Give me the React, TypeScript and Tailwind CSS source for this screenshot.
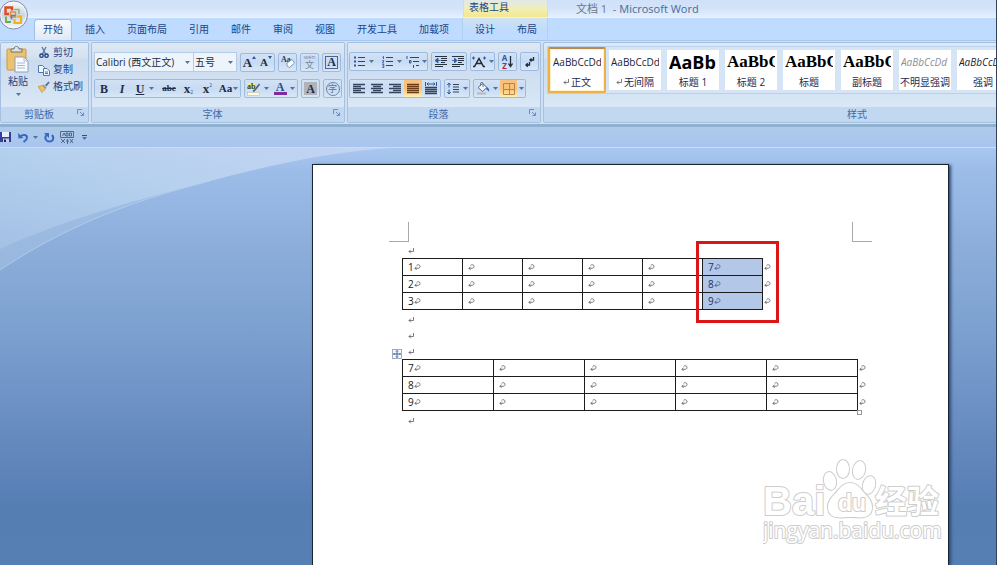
import type { ReactNode } from "react";

const serif = "font-['Liberation_Serif',serif] font-bold text-[#222c44]";

function Caret() {
  return (
    <svg width="5" height="3" viewBox="0 0 5 3" className="shrink-0" aria-hidden="true">
      <path d="M0 0h5L2.500 3z" fill="#54749f" />
    </svg>
  );
}

function Group({ children, className = "" }: { children: ReactNode; className?: string }) {
  return (
    <div
      className={`flex h-[19px] overflow-hidden rounded-xs border border-[#9dbbe0] bg-linear-to-b from-[#d3e2f5] via-[#c8dbf2] to-[#d8e7f8] ${className}`}
    >
      {children}
    </div>
  );
}

function Tool({
  label,
  children,
  className = "w-[17px]",
  caret = false,
  active = false,
}: {
  label: string;
  children: ReactNode;
  className?: string;
  caret?: boolean;
  active?: boolean;
}) {
  return (
    <button
      type="button"
      aria-label={label}
      title={label}
      className={`flex h-full shrink-0 items-center justify-center gap-[3px] leading-none ${
        active ? "bg-linear-to-b from-[#f7c185] via-[#f9c272] to-[#fff0b5]" : ""
      } ${className}`}
    >
      {children}
      {caret && <Caret />}
    </button>
  );
}

function Panel({ title, launcher = true, className = "", children }: { title: string; launcher?: boolean; className?: string; children: ReactNode }) {
  return (
    <section
      aria-label={title}
      className={`flex h-[81px] flex-col overflow-hidden rounded-xs border border-[#a5c1e2] bg-[linear-gradient(#dfe9f5_0%,#d5e1f1_18%,#cadbee_22%,#d9e7f6_80%)] ${className}`}
    >
      <div className="min-h-0 flex-1">{children}</div>
      <div className="flex h-[15px] shrink-0 items-center bg-[#c1d8f0] text-[10px] text-[#3e6aaa]">
        <span className="flex-1 text-center">{title}</span>
        {launcher && (
          <button type="button" aria-label={`${title}设置`} className="mr-1 mb-1">
            <svg width="7" height="7" viewBox="0 0 7 7" fill="none" stroke="#6a8cb9">
              <path d="M.5 5V.5H5M3 3l3 3M6.500 3.500v3h-3" />
            </svg>
          </button>
        )}
      </div>
    </section>
  );
}

function Lines({ rows, color = "#35435c" }: { rows: [number, number][]; color?: string }) {
  return (
    <svg width="12" height="11" viewBox="0 0 12 11" aria-hidden="true">
      {rows.map(([x, w], i) => (
        <path key={i} d={`M${x} ${i * 2 + 1.5}h${w}`} stroke={color} strokeWidth="1.300" />
      ))}
    </svg>
  );
}

function PilcrowArrow() {
  return (
    <svg width="6" height="6" viewBox="0 0 6 6" fill="none" stroke="#5b5b66" strokeWidth=".8" className="inline-block shrink-0" role="img" aria-label="段落标记">
      <path d="M5.500 0v3.500H1M2.800 1.700L1 3.500l1.800 1.800" />
    </svg>
  );
}

function CellMark({ selected = false }: { selected?: boolean }) {
  return (
    <svg
      width="7"
      height="7"
      viewBox="0 0 7 7"
      fill="none"
      stroke={selected ? "#41598a" : "#5b5b66"}
      strokeWidth=".8"
      className="inline-block shrink-0"
      role="img"
      aria-label="单元格标记"
    >
      <path d="M2.600 1.300C3.600.2 6 .6 6 2.400 6 3.800 5 4.300 4 4.300H.9M2.600 2.600L.9 4.300 2.600 6" />
    </svg>
  );
}

function Paragraph() {
  return (
    <p className="flex h-4 items-center pt-[3px] pl-[6px]">
      <PilcrowArrow />
    </p>
  );
}

function WordTable({ rows, label, wide = false, selectedColumn = -1 }: { rows: string[][]; label: string; wide?: boolean; selectedColumn?: number }) {
  return (
    <table aria-label={label} className={`table-fixed border-collapse ${wide ? "w-[466px]" : "w-[371px]"}`}>
      <colgroup>
        {rows[0].map((_, i) => (
          <col key={i} className={wide ? "w-[91px]" : "w-[60px]"} />
        ))}
        <col />
      </colgroup>
      <tbody>
        {rows.map((row, r) => (
          <tr key={r} className="h-[17px]">
            {row.map((cell, c) => (
              <td
                key={c}
                className={`border border-[#1c1c1c] p-0 pl-[5px] ${c === selectedColumn ? "bg-[#b3c7e9] text-[#1c3466]" : ""}`}
              >
                <span className="flex h-4 items-center text-[10px] leading-4">
                  {cell}
                  <CellMark selected={c === selectedColumn} />
                </span>
              </td>
            ))}
            <td className="p-0 pl-px">
              <span className="flex h-4 items-center">
                <CellMark />
              </span>
            </td>
          </tr>
        ))}
      </tbody>
    </table>
  );
}

function OfficeButton() {
  return (
    <button type="button" aria-label="Office 按钮" className="absolute top-0 left-0 z-10">
      <svg width="29" height="31" viewBox="0 0 29 31">
        <defs>
          <linearGradient id="orb" x1="0" y1="0" x2="0" y2="1">
            <stop offset="0" stopColor="#fafcff" />
            <stop offset=".5" stopColor="#ccd5e2" />
            <stop offset="1" stopColor="#f4f8fc" />
          </linearGradient>
        </defs>
        <circle cx="13.500" cy="15" r="14" fill="url(#orb)" stroke="#7e8fa8" />
        <circle cx="13.500" cy="15" r="12.600" fill="none" stroke="#fff" opacity=".7" />
        <g fill="none">
          <path d="M9 14H5.500V7.500h6.500v3" stroke="#dd4a1f" strokeWidth="2.400" />
          <path d="M14 9.500h5v4.500" stroke="#8cbf63" strokeWidth="1.600" />
          <path d="M6 16.500v5.500h5" stroke="#6cab4c" strokeWidth="1.800" />
          <path d="M10.500 12h5v5h-5z" stroke="#f08a35" strokeWidth="1.500" />
          <path d="M11.500 19.500v-4h4" stroke="#3f8cc9" strokeWidth="1.600" />
          <path d="M17 16.500h4v6.500h-6.500v-4" stroke="#f2b21c" strokeWidth="2.200" />
        </g>
      </svg>
    </button>
  );
}

const tabs = ["插入", "页面布局", "引用", "邮件", "审阅", "视图", "开发工具", "加载项"];

function TitleAndTabs() {
  return (
    <header className="relative text-[10px] text-[#1c4587]">
      <OfficeButton />
      <div className="flex h-[18px] border-b border-[#e9f3fe] bg-linear-to-b from-[#cfe0f8] via-[#d3e4fa] to-[#e4effc]">
        <div className="ml-[463px] w-[85px] border-x border-[#dfe0ae] bg-linear-to-b from-[#dfe9ea] via-[#efeeb9] to-[#f5e889] pl-[5px] leading-[14px]">
          表格工具
        </div>
        <h1 className="ml-7 text-[11px] leading-[17px] text-[#4d6a96]">
          <span className="text-[#6c7685]">文档 1&nbsp; - </span>Microsoft Word
        </h1>
      </div>
      <nav aria-label="功能区" className="flex h-[23px] items-end border-b border-[#a9c7ee] bg-[#bfdbff]">
        <a href="#home" aria-current="page" className="ml-[34px] h-[21px] w-[38px] rounded-t-sm border border-b-0 border-[#9fbfe8] bg-linear-to-b from-[#f6faff] to-[#dfe9f6] text-center leading-[19px]">
          开始
        </a>
        <div className="ml-[13px] flex gap-[22px]">
          {tabs.map((t) => (
            <a key={t} href="#tab" className="leading-[21px]">
              {t}
            </a>
          ))}
        </div>
        <div className="ml-[13px] flex h-full w-[86px] items-end gap-[22px] border-x border-[#b2cfee] bg-linear-to-b from-[#cfe2f0] to-[#bfdbff] to-60% pl-[12px]">
          <a href="#design" className="leading-[21px]">设计</a>
          <a href="#layout" className="leading-[21px]">布局</a>
        </div>
      </nav>
    </header>
  );
}

function ClipboardPanel() {
  const item = "flex h-[17px] items-center gap-[3px]";
  return (
    <Panel title="剪贴板" className="w-[89px] shrink-0">
      <div className="flex gap-[9px] pt-px pl-[6px] text-[10px] text-[#1c4587]">
        <button type="button" className="flex w-[22px] flex-col items-center">
          <svg width="24" height="27" viewBox="0 0 24 27" className="mt-[2px]">
            <rect x="1" y="3" width="19" height="21" rx="1" fill="#edc26d" stroke="#c99a49" />
            <path d="M5 6V3h3c0-3.500 5-3.500 5 0h3v3z" fill="#dce3ea" stroke="#69727e" />
            <path d="M9 11h9l4 4v11H9z" fill="#f7faff" stroke="#8b9fbf" />
            <path d="M18 11v4h4M11 17h8M11 19.500h8M11 22h8" fill="none" stroke="#aabad2" />
          </svg>
          <span className="mt-px leading-[14px]">粘贴</span>
          <span className="mt-[5px]"><Caret /></span>
        </button>
        <div>
          <button type="button" className={item}>
            <svg width="12" height="13" viewBox="0 0 12 13" fill="none">
              <path d="M4 1l3.500 7M8 1L4.500 8" stroke="#5678aa" strokeWidth="1.300" />
              <circle cx="3.500" cy="9.700" r="1.700" stroke="#1d3f86" strokeWidth="1.400" />
              <circle cx="8.500" cy="9.700" r="1.700" stroke="#1d3f86" strokeWidth="1.400" />
            </svg>
            剪切
          </button>
          <button type="button" className={item}>
            <svg width="12" height="12" viewBox="0 0 12 12" fill="#f2f7ff" stroke="#4f78b2">
              <path d="M.5 1.500h4l2 2v5h-6z" />
              <path d="M5.500 4.500h3.500l2.500 2.500v4.500h-6zM7 8h3M7 9.500h3" />
            </svg>
            复制
          </button>
          <button type="button" className={item}>
            <svg width="12" height="12" viewBox="0 0 12 12">
              <path d="M7 4l3.500-3.500 1.200 1L8.500 5.500z" fill="#5c6e93" />
              <path d="M5.500 3.500l3 3-1 1.500-3.500-3.500z" fill="#8c97ab" />
              <path d="M4.500 4.500L0 5.500l4 6 3.500-3.500z" fill="#ecc263" stroke="#b68b34" strokeWidth=".6" />
            </svg>
            格式刷
          </button>
        </div>
      </div>
    </Panel>
  );
}

function Combo({ label, value, className }: { label: string; value: string; className: string }) {
  return (
    <label className={`relative flex h-[20px] items-center border border-[#b4cdea] bg-[#edf4fc] ${className}`}>
      <select aria-label={label} defaultValue={value} className="h-full w-full appearance-none bg-transparent pl-px text-[10px] text-[#222b3c]">
        <option>{value}</option>
      </select>
      <span className="pointer-events-none absolute right-[3px] flex">
        <Caret />
      </span>
    </label>
  );
}

function FontPanel() {
  return (
    <Panel title="字体" className="shrink-0">
      <div className="flex flex-col gap-[7px] px-[2px] pt-[9px]">
        <div className="flex items-center gap-[3px]">
          <div className="flex">
            <Combo label="字体" value="Calibri (西文正文)" className="w-[100px]" />
            <Combo label="字号" value="五号" className="w-[43px] border-l-0" />
          </div>
          <Group>
            <Tool label="增大字体">
              <span className={`${serif} text-[13px]`}>A</span>
              <svg width="4" height="3" className="-ml-[3px] mb-[9px]"><path d="M0 3h4L2 0z" fill="#2b57a0" /></svg>
            </Tool>
            <Tool label="缩小字体" className="w-[16px]">
              <span className={`${serif} text-[11px]`}>A</span>
              <svg width="4" height="3" className="-ml-[3px] mb-[9px]"><path d="M0 0h4L2 3z" fill="#2b57a0" /></svg>
            </Tool>
          </Group>
          <Group>
            <Tool label="清除格式">
              <svg width="14" height="14" viewBox="0 0 14 14">
                <text x="0" y="7" fontSize="8" fontWeight="bold" fontFamily="Liberation Serif, serif" fill="#2c3950">Aa</text>
                <path d="M6 8l5-3.500 2.500 3.500-5 4.500-2.500-1.500z" fill="#fbfcff" stroke="#6f83a3" strokeWidth=".8" />
              </svg>
            </Tool>
          </Group>
          <Group>
            <Tool label="拼音指南">
              <span className="flex flex-col items-center text-[#7386a6]">
                <span className="text-[6px] leading-[6px]">wén</span>
                <span className="text-[9px] leading-[10px]">文</span>
              </span>
            </Tool>
          </Group>
          <Group>
            <Tool label="字符边框">
              <span className={`${serif} flex size-[13px] items-center justify-center border border-[#4d668f] text-[12px]`}>A</span>
            </Tool>
          </Group>
        </div>
        <div className="flex items-center gap-[3px]">
          <Group>
            <Tool label="加粗" className="w-[18px]"><span className={`${serif} text-[12px]`}>B</span></Tool>
            <Tool label="倾斜" className="w-[18px]"><span className={`${serif} text-[12px] italic`}>I</span></Tool>
            <Tool label="下划线" caret className="w-[28px]"><span className={`${serif} mr-[2px] text-[12px] underline`}>U</span></Tool>
            <Tool label="删除线" className="w-[20px]"><span className={`${serif} text-[9px] line-through`}>abe</span></Tool>
            <Tool label="下标" className="w-[19px]"><span className={`${serif} text-[13px]`}>x</span><span className="-ml-[3px] mt-[7px] text-[5px] text-[#2b57a0]">2</span></Tool>
            <Tool label="上标" className="w-[19px]"><span className={`${serif} text-[13px]`}>x</span><span className="-ml-[3px] mb-[7px] text-[5px] text-[#2b57a0]">2</span></Tool>
            <Tool label="更改大小写" caret className="w-[23px]"><span className={`${serif} -mr-[2px] text-[11px]`}>Aa</span></Tool>
          </Group>
          <Group>
            <Tool label="突出显示" caret className="w-[26px]">
              <svg width="14" height="14" viewBox="0 0 14 14">
                <rect x="0" y="1" width="8" height="7" fill="#f5ef6d" />
                <text x="0" y="7" fontSize="8" fontWeight="bold" fontFamily="Liberation Serif, serif" fill="#2c3950">ab</text>
                <path d="M12.500 2L8 8l-2 1.500" stroke="#57657d" strokeWidth="1.700" fill="none" />
                <rect x=".5" y="10.500" width="12" height="3" fill="#fbfbe0" stroke="#bdc0a9" strokeWidth=".6" />
              </svg>
            </Tool>
            <Tool label="字体颜色" caret className="w-[26px]">
              <span className="flex w-[13px] flex-col items-center border-b-3 border-[#7c2ba0]">
                <span className={`${serif} text-[12px] leading-[10px] text-[#274f96]`}>A</span>
              </span>
            </Tool>
          </Group>
          <Group>
            <Tool label="字符底纹">
              <span className={`${serif} flex size-[13px] items-center justify-center bg-[#b0b3b9] text-[12px]`}>A</span>
            </Tool>
          </Group>
          <Group>
            <Tool label="带圈字符">
              <span className="flex size-[14px] items-center justify-center rounded-full border border-[#6c83a8] text-[9px] text-[#5b739b]">字</span>
            </Tool>
          </Group>
        </div>
      </div>
    </Panel>
  );
}

function ParagraphPanel() {
  const indent = "M0 .5h12M6 2.500h6M6 4.500h6M6 6.500h4M0 8.500h12M0 10.500h8";
  return (
    <Panel title="段落" className="shrink-0">
      <div className="flex flex-col gap-2 px-px pt-[9px]">
        <div className="flex items-center gap-[3px]">
          <Group>
            <Tool label="项目符号" caret className="w-[28px]">
              <svg width="12" height="11" viewBox="0 0 12 11">
                <path d="M0 1.500h2M0 5.500h2M0 9.500h2" stroke="#2b57a0" strokeWidth="2" />
                <path d="M4 1.500h7M4 5.500h7M4 9.500h7" stroke="#35435c" strokeWidth="1.200" />
              </svg>
            </Tool>
            <Tool label="编号" caret className="w-[27px]">
              <svg width="12" height="12" viewBox="0 0 12 12">
                <path d="M.5 1L1.500.5V3M.3 4.500h1.500L.5 7H2M.3 8.500h1.500v3H.3M.5 10h1" fill="none" stroke="#2b57a0" strokeWidth=".9" />
                <path d="M4 1.500h7M4 5.500h7M4 9.500h7" stroke="#35435c" strokeWidth="1.200" />
              </svg>
            </Tool>
            <Tool label="多级列表" caret className="w-[22px]">
              <svg width="13" height="12" viewBox="0 0 13 12">
                <path d="M1 0v3M3.500 4.500h1.500v2.500H3.500zM7.500 9v3" fill="none" stroke="#2b57a0" />
                <path d="M4 1.500h9M7 5.500h6M10 9.500h3" stroke="#35435c" strokeWidth="1.200" />
              </svg>
            </Tool>
          </Group>
          <Group>
            <Tool label="减少缩进量">
              <svg width="12" height="11" viewBox="0 0 12 11">
                <path d={indent} stroke="#2a3242" strokeWidth="1.200" />
                <path d="M0 4.500L3 2v5zM3 4.500h2.500" fill="#2b57a0" stroke="#2b57a0" strokeWidth=".8" />
              </svg>
            </Tool>
            <Tool label="增加缩进量">
              <svg width="12" height="11" viewBox="0 0 12 11">
                <path d={indent} stroke="#2a3242" strokeWidth="1.200" />
                <path d="M5 4.500L2.500 2v5zM0 4.500h2.500" fill="#2b57a0" stroke="#2b57a0" strokeWidth=".8" />
              </svg>
            </Tool>
          </Group>
          <Group>
            <Tool label="中文版式" caret className="w-[23px]">
              <svg width="14" height="12" viewBox="0 0 14 12" fill="none">
                <path d="M1 10.500h1.500L7 2.500l4.500 8H13M4 7.500h6" stroke="#1f2838" strokeWidth="1.500" />
                <path d="M0 2h3M1.500.5v3M11 2h3M12.500.5v3" stroke="#2b57a0" strokeWidth="1.100" />
              </svg>
            </Tool>
          </Group>
          <Group>
            <Tool label="排序">
              <span className="flex flex-col text-[8px] leading-[8px] font-bold text-[#2b57a0]">
                <span>A</span>
                <span className="text-[#a32c38]">Z</span>
              </span>
              <svg width="5" height="13" viewBox="0 0 5 13" className="-ml-[2px]">
                <path d="M2.500 1v9M.5 8.500l2 3 2-3" fill="none" stroke="#222b3c" strokeWidth="1.300" />
              </svg>
            </Tool>
          </Group>
          <Group>
            <Tool label="显示编辑标记">
              <svg width="10" height="12" viewBox="0 0 10 12" fill="none" stroke="#1f2838" strokeWidth="1.300">
                <path d="M8.500 1v3H5M6.500 2.500L5 4l1.500 1.500M4.500 6v3H1M2.700 7.300L1 9l1.700 1.700" />
              </svg>
            </Tool>
          </Group>
        </div>
        <div className="flex items-center gap-[3px]">
          <Group>
            <Tool label="左对齐" className="w-[18px]"><Lines rows={[[0, 12], [0, 8], [0, 12], [0, 8], [0, 12]]} /></Tool>
            <Tool label="居中" className="w-[18px]"><Lines rows={[[0, 12], [2, 8], [0, 12], [2, 8], [0, 12]]} /></Tool>
            <Tool label="右对齐" className="w-[18px]"><Lines rows={[[0, 12], [4, 8], [0, 12], [4, 8], [0, 12]]} /></Tool>
            <Tool label="两端对齐" active className="w-[18px]"><Lines rows={[[0, 12], [0, 12], [0, 12], [0, 12], [0, 12]]} color="#6b3c16" /></Tool>
            <Tool label="分散对齐" className="w-[18px]">
              <svg width="12" height="13" viewBox="0 0 12 13">
                <path d="M0 5.500h12M0 7.500h12M0 9.500h12M0 11.500h12" stroke="#35435c" strokeWidth="1.300" />
                <path d="M.5 0v4M11.500 0v4M2 2h8M3.500.5L2 2l1.500 1.500M8.500.5L10 2 8.500 3.500" fill="none" stroke="#2b57a0" />
              </svg>
            </Tool>
          </Group>
          <Group>
            <Tool label="行距" caret className="w-[24px]">
              <svg width="13" height="13" viewBox="0 0 13 13">
                <path d="M2 1v4.500M2 7.500V12M.3 3L2 1l1.700 2M.3 10L2 12l1.700-2" fill="none" stroke="#2b57a0" />
                <path d="M6 2.500h6M6 5h6M6 7.500h6M6 10h6" stroke="#35435c" strokeWidth="1.200" />
              </svg>
            </Tool>
          </Group>
          <Group>
            <Tool label="底纹" caret className="w-[26px]">
              <svg width="14" height="13" viewBox="0 0 14 13">
                <path d="M2 5.500L6.500 1.500l4.500 4-4.500 4z" fill="#eef3fa" stroke="#5b6c8a" />
                <path d="M4.500 4V1.500C4.500 0 7 0 7 1.500V5" fill="none" stroke="#5b6c8a" strokeWidth=".9" />
                <path d="M11 5c2 1 2.500 3 2 5-1-2-2-2-3-3z" fill="#2f68b8" />
                <path d="M1 11.500h9" stroke="#b6b9b6" strokeWidth="2" />
              </svg>
            </Tool>
            <Tool label="边框" active className="w-[17px]">
              <svg width="12" height="12" viewBox="0 0 12 12" fill="none" stroke="#b98642">
                <path d="M.5.5h11v11H.5zM6.500.5v11M.5 6.500h11" />
              </svg>
            </Tool>
            <Tool label="边框选项" className="w-[8px]"><Caret /></Tool>
          </Group>
        </div>
      </div>
    </Panel>
  );
}

const calibri = "text-[10px] text-[#1b2433]";
const cambria = "font-['Liberation_Serif',serif] text-[17px] font-bold text-black";
const styles = [
  { name: "正文", mark: true, sample: "AaBbCcDd", look: calibri },
  { name: "无间隔", mark: true, sample: "AaBbCcDd", look: calibri },
  { name: "标题 1", sample: "AaBb", look: "text-[18px] font-bold text-black" },
  { name: "标题 2", sample: "AaBbC", look: cambria },
  { name: "标题", sample: "AaBbC", look: cambria },
  { name: "副标题", sample: "AaBbC", look: cambria },
  { name: "不明显强调", sample: "AaBbCcDd", look: "text-[10px] italic text-[#8b8f96]" },
  { name: "强调", sample: "AaBbCcDd", look: "text-[10px] italic text-[#1b2433]" },
];

function StylesPanel() {
  return (
    <Panel title="样式" launcher={false} className="min-w-[628px] flex-1">
      <div className="flex px-[3px] pt-[3px]">
        <div className="flex flex-1 overflow-hidden border-y border-l border-[#b9d1ec] bg-[#d6e5f6]">
          {styles.map((s, i) => (
            <button
              key={s.name}
              type="button"
              aria-pressed={i === 0}
              className={`flex h-[46px] w-[58px] shrink-0 border-2 p-px ${
                i === 0 ? "rounded-xs border-[#eeb147] border-t-[#b98b4d] bg-[#fff1c4]" : "border-transparent"
              }`}
            >
              <span className="flex h-[40px] w-full flex-col overflow-hidden bg-white px-[2px]">
                <span className={`flex h-[24px] items-center overflow-hidden whitespace-nowrap ${s.look}`}>{s.sample}</span>
                <span className="flex h-[16px] items-center justify-center gap-[2px] text-[10px] whitespace-nowrap text-[#1e2a50]">
                  {s.mark && <PilcrowArrow />}
                  {s.name}
                </span>
              </span>
            </button>
          ))}
        </div>
      </div>
    </Panel>
  );
}

function QuickAccess() {
  return (
    <div role="toolbar" aria-label="快速访问工具栏" className="flex h-[21px] items-center border-b border-[#c9def6] bg-linear-to-b from-[#aecbe9] to-[#a9c4ee]">
      <button type="button" aria-label="保存">
        <svg width="12" height="12" viewBox="0 0 12 12">
          <path d="M0 1h11v10H0z" fill="#343d9a" />
          <path d="M2 1h7v5H2z" fill="#e8eefb" />
          <path d="M3 7.500h6V11H3z" fill="#c9cfe2" />
          <path d="M4 8.500h2V11H4z" fill="#202858" />
        </svg>
      </button>
      <button type="button" aria-label="撤消" className="ml-[6px] flex items-center gap-[4px]">
        <svg width="11" height="11" viewBox="0 0 11 11" fill="none">
          <path d="M2 4.500C5 2 9 2.500 9 5.500 9 8 7 9 5.500 10" stroke="#356ac4" strokeWidth="2" />
          <path d="M0 1l.5 5.500L5.500 6z" fill="#356ac4" />
        </svg>
        <Caret />
      </button>
      <button type="button" aria-label="重复" className="ml-[6px]">
        <svg width="11" height="11" viewBox="0 0 11 11" fill="none">
          <path d="M2.500 3C0 6 2 9.500 5.500 9.500S10.500 6 8 3" stroke="#356ac4" strokeWidth="2" />
          <path d="M0 1h5v5z" fill="#356ac4" />
        </svg>
      </button>
      <button type="button" aria-label="表格" className="ml-[5px]">
        <svg width="14" height="13" viewBox="0 0 14 13" fill="none" stroke="#4c5f81" strokeWidth=".9">
          <path d="M.5.5h13v6H.5zM2.500 5L4 2l1.500 3M6 2h2v3H6zM9.500 2h2v3h-2z" />
          <path d="M1 8l4 4M5 8l-4 4M6 10h3M7.500 8v5M10 8l3 4M13 8l-3 4" />
        </svg>
      </button>
      <button type="button" aria-label="自定义快速访问工具栏" className="ml-[8px] flex flex-col items-center gap-px">
        <span className="h-px w-[5px] bg-[#314e7f]" />
        <Caret />
      </button>
    </div>
  );
}

function Watermark() {
  return (
    <svg className="absolute top-[293px] right-px" width="184" height="92" viewBox="0 0 184 92" role="img" aria-label="Baidu 经验">
      <g fill="#fff" stroke="#cdcdcd" strokeWidth="2" strokeLinejoin="round" style={{ paintOrder: "stroke" }}>
        <text x="0" y="57" fontSize="40" fontWeight="bold" fontFamily="Liberation Sans, sans-serif">Bai</text>
        <text x="112" y="55" fontSize="32" fontWeight="bold" fontFamily="Noto Sans CJK SC, sans-serif">经验</text>
        <text x="0" y="80" fontSize="21" fontFamily="Open Sans, sans-serif">jingyan.baidu.com</text>
        <ellipse cx="67" cy="23" rx="6" ry="9" transform="rotate(-12 67 23)" />
        <ellipse cx="80" cy="11" rx="6" ry="9" />
        <ellipse cx="96" cy="12" rx="6" ry="9" transform="rotate(12 96 12)" />
        <ellipse cx="106" cy="27" rx="6" ry="9" transform="rotate(15 106 27)" />
        <path d="M87 25c8 0 11 7 17 13 8 8 6 20-3 21-5 1-8 0-14 0s-9 1-14 0c-9-1-11-13-3-21 6-6 9-13 17-13z" />
        <text x="75" y="53" fontSize="23" fontWeight="bold" fontFamily="Liberation Sans, sans-serif">du</text>
      </g>
    </svg>
  );
}

function Page() {
  return (
    <article className="relative w-full max-w-[637px] border border-b-0 border-[#1b2230] bg-white pt-[76px] pl-[89px] text-[#202020] shadow-[2px_1px_3px_#2c4a78]">
      <span className="absolute top-[57px] left-[76px] h-[20px] w-[20px] border-r border-b border-[#a9a9a9]" />
      <span className="absolute top-[57px] right-[76px] h-[20px] w-[20px] border-b border-l border-[#a9a9a9]" />
      <div className="pb-px"><Paragraph /></div>
      <div className="relative w-max">
        <WordTable
          label="表格一"
          selectedColumn={5}
          rows={[
            ["1", "", "", "", "", "7"],
            ["2", "", "", "", "", "8"],
            ["3", "", "", "", "", "9"],
          ]}
        />
        <span className="pointer-events-none absolute -top-[17px] left-[294px] h-[82px] w-[83px] border-3 border-[#dc1517]" />
      </div>
      <Paragraph />
      <Paragraph />
      <div className="pb-px"><Paragraph /></div>
      <div className="relative w-max">
        <button type="button" aria-label="移动表格" className="absolute -top-[10px] -left-[10px]">
          <svg width="10" height="10" viewBox="0 0 10 10" fill="none" stroke="#33569c" strokeWidth=".9">
            <rect x=".5" y=".5" width="9" height="9" fill="#f4f7fc" stroke="#96a3ba" />
            <path d="M5 1.500v7M1.500 5h7M4 2.500l1-1 1 1M4 7.500l1 1 1-1M2.500 4l-1 1 1 1M7.500 4l1 1-1 1" />
          </svg>
        </button>
        <WordTable
          label="表格二"
          wide
          rows={[
            ["7", "", "", "", ""],
            ["8", "", "", "", ""],
            ["9", "", "", "", ""],
          ]}
        />
        <span className="absolute -bottom-[4px] left-[455px] size-[5px] border border-[#9a9a9a] bg-white" />
      </div>
      <Paragraph />
      <Watermark />
    </article>
  );
}

export default function App() {
  return (
    <div className="flex min-h-screen flex-col overflow-hidden border-r border-[#33415a] font-['Open_Sans','Noto_Sans_CJK_SC',sans-serif]">
      <TitleAndTabs />
      <div className="flex gap-[2px] overflow-hidden border-b-3 border-[#8fb1cf] bg-[#cfe0f3] pt-px pb-px">
        <ClipboardPanel />
        <FontPanel />
        <ParagraphPanel />
        <StylesPanel />
      </div>
      <QuickAccess />
      <main className="relative flex flex-1 justify-end overflow-hidden bg-[linear-gradient(#a9c7f0_0%,#9dbde9_5%,#8daedb_23%,#80a4d2_39%,#7094c6_58%,#6388bd_72%,#5c82b9_80%,#557fb3_86%,#5580b3_100%)] pt-4 pr-[47px]">
        <svg className="absolute top-0 left-0" width="400" height="130" viewBox="0 0 400 130" aria-hidden="true">
          <defs>
            <linearGradient id="sky" x1="0" y1="1" x2="1" y2="0">
              <stop offset="0" stopColor="#a3c1e6" />
              <stop offset=".5" stopColor="#b5d0ee" />
              <stop offset="1" stopColor="#c3d5f3" />
            </linearGradient>
          </defs>
          <path d="M0 122C60 84 120 56 210 33L0 90z" fill="#a5c2e4" opacity=".55" />
          <path d="M0 122C60 82 120 56 210 33" fill="none" stroke="#b3cdeb" strokeWidth=".8" />
          <path d="M0 0h390C330 4 270 17 210 33 130 54 60 73 0 101z" fill="url(#sky)" />
        </svg>
        <Page />
      </main>
    </div>
  );
}
